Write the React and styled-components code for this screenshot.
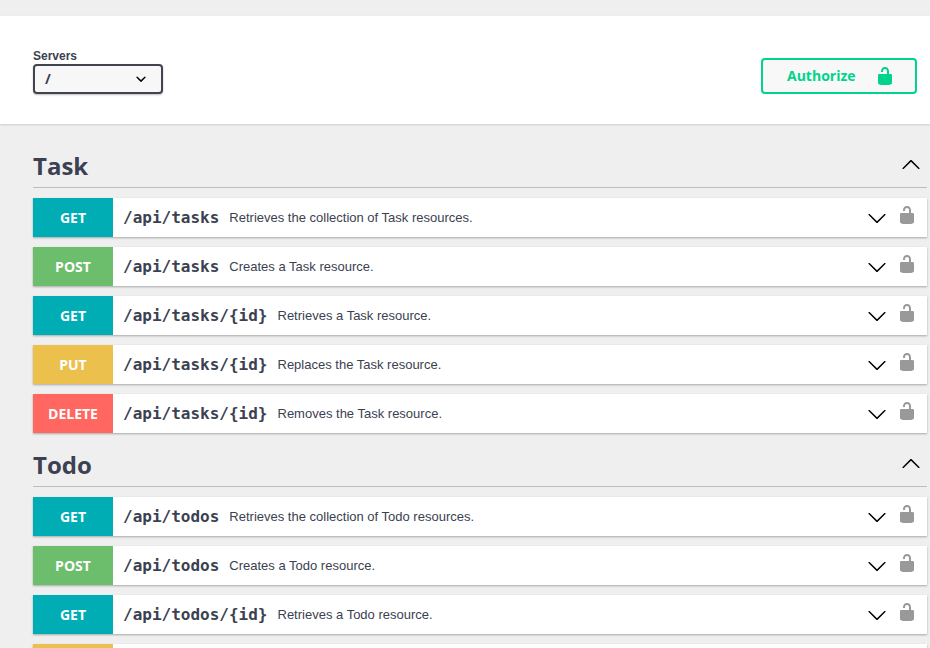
import React from 'react';
import styled, { createGlobalStyle } from 'styled-components';

const GlobalStyle = createGlobalStyle`
  html, body {
    margin: 0;
    padding: 0;
    height: 100%;
    overflow: hidden;
    background: #efefef;
  }
`;

const methodColors = {
  GET: '#00adb5',
  POST: '#6cbd6c',
  PUT: '#ecc04c',
  DELETE: '#ff6760',
};

const Page = styled.div`
  height: 648px;
  overflow: hidden;
  padding-top: 16px;
  box-sizing: border-box;
  font-family: 'Liberation Sans', Arial, sans-serif;
  color: #3b4151;
`;

const ServerBar = styled.div`
  height: 108px;
  background: #fff;
  box-shadow: 0 1px 2px 0 rgba(0, 0, 0, 0.15);
  display: flex;
  align-items: center;
  justify-content: space-between;
  padding: 0 13px 0 33px;
  box-sizing: border-box;
`;

const ServerPicker = styled.div`
  display: flex;
  flex-direction: column;
  margin-top: 2px;
`;

const ServerLabel = styled.label`
  font-size: 12px;
  font-weight: 700;
  line-height: 15px;
  margin-bottom: 0;
`;

const ServerSelect = styled.div`
  width: 130px;
  height: 30px;
  box-sizing: border-box;
  border: 2px solid #41444e;
  border-radius: 4px;
  background: #f7f7f7;
  box-shadow: 0 1px 2px 0 rgba(0, 0, 0, 0.25);
  display: flex;
  align-items: center;
  justify-content: space-between;
  padding: 0 10px 0 10px;
  font-family: 'Open Sans', sans-serif;
  font-size: 14px;
  font-weight: 700;
`;

const AuthorizeButton = styled.button`
  width: 156px;
  height: 36px;
  box-sizing: border-box;
  border: 2px solid #00d38d;
  border-radius: 4px;
  background: #f8f8f8;
  color: #00d38d;
  font-family: 'Open Sans', sans-serif;
  font-size: 14px;
  font-weight: 700;
  display: flex;
  align-items: center;
  padding: 0 0 0 24px;
  margin-top: 12px;

  span {
    margin-right: 19px;
    padding-bottom: 2px;
  }
`;

const Tag = styled.section`
  padding: 0 3px 0 33px;
`;

const TagHeader = styled.div`
  display: flex;
  align-items: center;
  justify-content: space-between;
  height: 44px;
  box-sizing: border-box;
  margin-top: ${(p) => (p.$first ? '20px' : '0')};
  margin-bottom: 10px;
  border-bottom: 1px solid #bcbdc1;
  font-family: 'Open Sans', sans-serif;
  font-size: 24px;
  font-weight: 700;
  padding-right: 6px;
  padding-bottom: 1px;
`;

const Row = styled.div`
  display: flex;
  align-items: center;
  height: 39px;
  margin-bottom: 10px;
  background: #fff;
  box-shadow: 0 1px 2px rgba(0, 0, 0, 0.3);
`;

const Method = styled.div`
  width: 80px;
  height: 100%;
  flex: none;
  display: flex;
  align-items: center;
  justify-content: center;
  background: ${(p) => methodColors[p.$method]};
  color: #fff;
  font-family: 'Open Sans', sans-serif;
  font-size: 14px;
  font-weight: 700;
  margin-right: 10px;
`;

const Path = styled.span`
  font-family: 'DejaVu Sans Mono', monospace;
  font-size: 16px;
  font-weight: 700;
  margin-right: 10px;
`;

const Summary = styled.span`
  flex: 1;
  font-size: 13px;
`;

const RowIcons = styled.div`
  display: flex;
  align-items: center;
  margin-right: 10px;
  gap: 10px;
`;

const LockSlot = styled.div`
  display: flex;
  margin-bottom: 5px;
`;

const Lock = ({ size = 20, color = '#999' }) => (
  <svg width={size} height={size} viewBox="0 0 20 20" fill={color}>
    <path d="M15.8 8H14V5.6C14 2.703 12.665 1 10 1 7.334 1 6 2.703 6 5.6V6h2v-.801C8 3.754 8.797 3 10 3c1.203 0 2 .754 2 2.199V8H4c-.553 0-1 .646-1 1.199V17c0 .549.428 1.139.951 1.307l1.197.387C5.672 18.861 6.55 19 7.1 19h5.8c.549 0 1.428-.139 1.951-.307l1.196-.387c.524-.167.953-.757.953-1.306V9.199C17 8.646 16.352 8 15.8 8z" />
  </svg>
);

const Arrow = ({ up }) => (
  <svg
    width="20"
    height="20"
    viewBox="0 0 20 20"
    fill="#000"
    style={up ? { transform: 'rotate(180deg)' } : undefined}
  >
    <path d="M17.418 6.109c.272-.268.709-.268.979 0s.271.701 0 .969l-7.908 7.83c-.27.268-.707.268-.979 0l-7.908-7.83c-.27-.268-.27-.701 0-.969.271-.268.709-.268.979 0L10 13.25l7.418-7.141z" />
  </svg>
);

const SmallArrow = () => (
  <svg width="20" height="20" viewBox="0 0 20 20" fill="#000">
    <path d="M13.418 7.859a.695.695 0 01.978 0 .68.68 0 010 .969l-3.908 3.83a.697.697 0 01-.979 0l-3.908-3.83a.68.68 0 010-.969.695.695 0 01.978 0L10 11l3.418-3.141z" />
  </svg>
);

const tags = [
  {
    name: 'Task',
    rows: [
      ['GET', '/api/tasks', 'Retrieves the collection of Task resources.'],
      ['POST', '/api/tasks', 'Creates a Task resource.'],
      ['GET', '/api/tasks/{id}', 'Retrieves a Task resource.'],
      ['PUT', '/api/tasks/{id}', 'Replaces the Task resource.'],
      ['DELETE', '/api/tasks/{id}', 'Removes the Task resource.'],
    ],
  },
  {
    name: 'Todo',
    rows: [
      ['GET', '/api/todos', 'Retrieves the collection of Todo resources.'],
      ['POST', '/api/todos', 'Creates a Todo resource.'],
      ['GET', '/api/todos/{id}', 'Retrieves a Todo resource.'],
      ['PUT', '/api/todos/{id}', 'Replaces the Todo resource.'],
    ],
  },
];

const App = () => {
  return (
    <Page>
      <GlobalStyle />
      <ServerBar>
        <ServerPicker>
          <ServerLabel>Servers</ServerLabel>
          <ServerSelect>
            /
            <SmallArrow />
          </ServerSelect>
        </ServerPicker>
        <AuthorizeButton>
          <span>Authorize</span>
          <Lock color="#00d38d" />
        </AuthorizeButton>
      </ServerBar>
      {tags.map((tag, i) => (
        <Tag key={tag.name}>
          <TagHeader $first={i === 0}>
            {tag.name}
            <Arrow up />
          </TagHeader>
          {tag.rows.map(([method, path, summary]) => (
            <Row key={method + path}>
              <Method $method={method}>{method}</Method>
              <Path>{path}</Path>
              <Summary>{summary}</Summary>
              <RowIcons>
                <Arrow />
                <LockSlot>
                  <Lock />
                </LockSlot>
              </RowIcons>
            </Row>
          ))}
        </Tag>
      ))}
    </Page>
  );
};

export default App;
